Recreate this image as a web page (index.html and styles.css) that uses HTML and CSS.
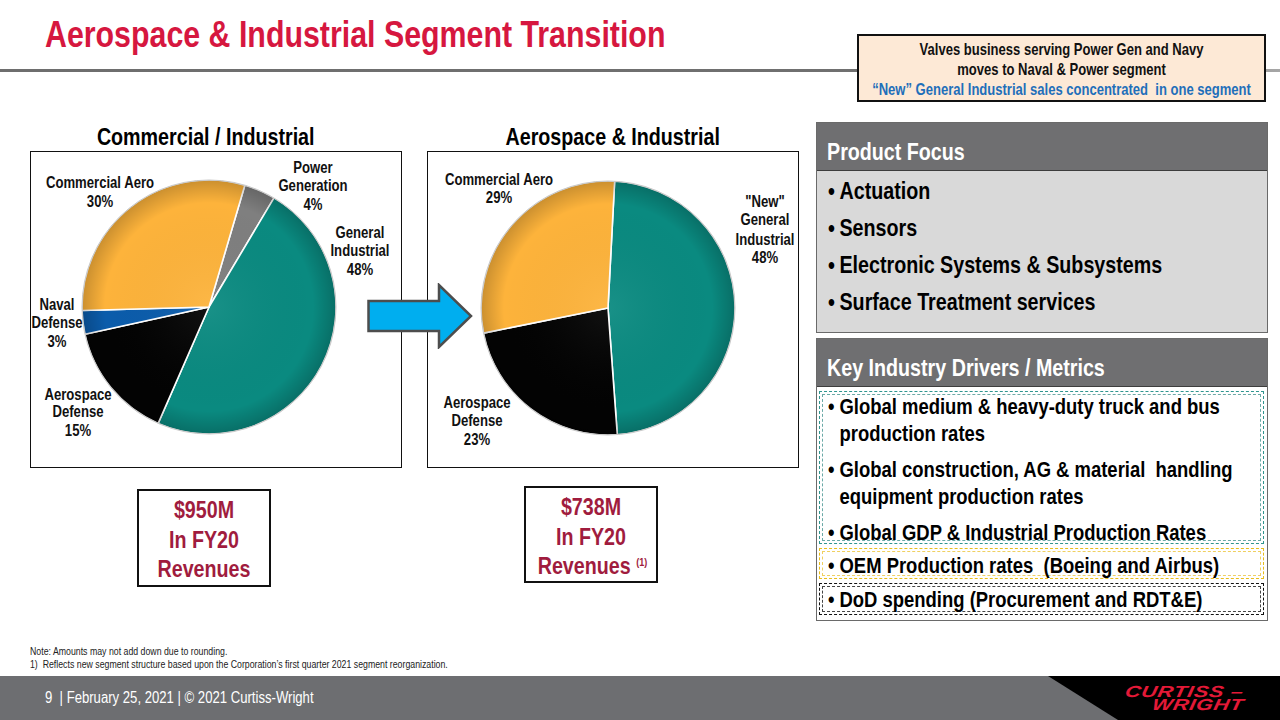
FILE: index.html
```html
<!DOCTYPE html>
<html lang="en">
<head>
<meta charset="utf-8">
<title>Aerospace &amp; Industrial Segment Transition</title>
<link rel="stylesheet" href="styles.css">
</head>
<body>
<div class="slide">
  <header class="header">
    <h1 class="title">Aerospace &amp; Industrial Segment Transition</h1>
    <div class="rule"></div>
    <div class="callout">
      <div class="callout-text">
        <div>Valves business serving Power Gen and Navy</div>
        <div>moves to Naval &amp; Power segment</div>
        <div class="callout-blue">“New” General Industrial sales concentrated&nbsp; in one segment</div>
      </div>
    </div>
  </header>

  <main class="main">
    <section class="left">
      <div class="charts">
        <div class="chart-col">
          <div class="chart-title chart-title-left"><span>Commercial / Industrial</span></div>
          <div class="chart-box">
            <svg class="pie" viewBox="0 0 370 315" width="370" height="315">
              <defs>
                <radialGradient id="shade1" cx="178" cy="155" r="127" gradientUnits="userSpaceOnUse">
                  <stop offset="0" stop-color="#fff" stop-opacity="0.06"/>
                  <stop offset="0.82" stop-color="#000" stop-opacity="0"/>
                  <stop offset="1" stop-color="#000" stop-opacity="0.2"/>
                </radialGradient>
              </defs>
              <g stroke="#fff" stroke-width="1.6" stroke-linejoin="round">
                <path fill="#7f7f7f" d="M178,155 L213.85,33.17 A127,127 0 0 1 243.03,45.91 Z"/>
                <path fill="#0a8a80" d="M178,155 L243.03,45.91 A127,127 0 0 1 127.16,271.38 Z"/>
                <path fill="#030303" d="M178,155 L127.16,271.38 A127,127 0 0 1 53.96,182.27 Z"/>
                <path fill="#0b5cab" d="M178,155 L53.96,182.27 A127,127 0 0 1 51.05,158.55 Z"/>
                <path fill="#fdb33b" d="M178,155 L51.05,158.55 A127,127 0 0 1 213.85,33.17 Z"/>
              </g>
              <circle cx="178" cy="155" r="127" fill="url(#shade1)" stroke="#c8c8c8" stroke-width="1"/>
              <g class="lbl">
                <text x="69" y="36">Commercial Aero</text>
                <text x="69" y="55">30%</text>
                <text x="282" y="21">Power</text>
                <text x="282" y="39">Generation</text>
                <text x="282" y="58">4%</text>
                <text x="329" y="86">General</text>
                <text x="329" y="104">Industrial</text>
                <text x="329" y="123">48%</text>
                <text x="26" y="158">Naval</text>
                <text x="26" y="176">Defense</text>
                <text x="26" y="195">3%</text>
                <text x="47" y="248">Aerospace</text>
                <text x="47" y="265">Defense</text>
                <text x="47" y="284">15%</text>
              </g>
            </svg>
          </div>
        </div>
        <div class="chart-col">
          <div class="chart-title"><span>Aerospace &amp; Industrial</span></div>
          <div class="chart-box">
            <svg class="pie" viewBox="0 0 370 315" width="370" height="315">
              <defs>
                <radialGradient id="shade2" cx="180" cy="156" r="127" gradientUnits="userSpaceOnUse">
                  <stop offset="0" stop-color="#fff" stop-opacity="0.06"/>
                  <stop offset="0.82" stop-color="#000" stop-opacity="0"/>
                  <stop offset="1" stop-color="#000" stop-opacity="0.2"/>
                </radialGradient>
              </defs>
              <g stroke="#fff" stroke-width="1.6" stroke-linejoin="round">
                <path fill="#0a8a80" d="M180,156 L186.65,29.17 A127,127 0 0 1 189.30,282.66 Z"/>
                <path fill="#030303" d="M180,156 L189.30,282.66 A127,127 0 0 1 55.50,181.11 Z"/>
                <path fill="#fdb33b" d="M180,156 L55.50,181.11 A127,127 0 0 1 186.65,29.17 Z"/>
              </g>
              <circle cx="180" cy="156" r="127" fill="url(#shade2)" stroke="#c8c8c8" stroke-width="1"/>
              <g class="lbl">
                <text x="71" y="33">Commercial Aero</text>
                <text x="71" y="51">29%</text>
                <text x="337" y="55">"New"</text>
                <text x="337" y="73">General</text>
                <text x="337" y="93">Industrial</text>
                <text x="337" y="111">48%</text>
                <text x="49" y="256">Aerospace</text>
                <text x="49" y="274">Defense</text>
                <text x="49" y="293">23%</text>
              </g>
            </svg>
          </div>
        </div>
        <svg class="arrow" viewBox="0 0 106 66" width="106" height="66">
          <polygon points="1.5,18 72,18 72,2 104,33 72,64 72,48 1.5,48" fill="#00aeef" stroke="#4d4d4d" stroke-width="2.5" stroke-linejoin="miter"/>
        </svg>
      </div>
      <div class="revenues">
        <div class="rev rev-left">
          <div>$950M</div>
          <div>In FY20</div>
          <div>Revenues</div>
        </div>
        <div class="rev rev-right">
          <div>$738M</div>
          <div>In FY20</div>
          <div>Revenues <sup class="fn">(1)</sup></div>
        </div>
      </div>
    </section>

    <aside class="panel">
      <div class="card card-focus">
        <div class="card-head"><span>Product Focus</span></div>
        <ul class="card-list focus-list">
          <li>Actuation</li>
          <li>Sensors</li>
          <li>Electronic Systems &amp; Subsystems</li>
          <li>Surface Treatment services</li>
        </ul>
      </div>
      <div class="card card-drivers">
        <div class="card-head"><span>Key Industry Drivers / Metrics</span></div>
        <div class="driver-body">
          <ul class="card-list group group-teal">
            <li>Global medium &amp; heavy-duty truck and bus production rates</li>
            <li>Global construction, AG &amp; material&nbsp; handling equipment production rates</li>
            <li>Global GDP &amp; Industrial Production Rates</li>
          </ul>
          <ul class="card-list group group-yellow">
            <li>OEM Production rates&nbsp; (Boeing and Airbus)</li>
          </ul>
          <ul class="card-list group group-black">
            <li>DoD spending (Procurement and RDT&amp;E)</li>
          </ul>
        </div>
      </div>
    </aside>
  </main>

  <div class="notes">
    <div>Note: Amounts may not add down due to rounding.</div>
    <div>1)&nbsp; Reflects new segment structure based upon the Corporation’s first quarter 2021 segment reorganization.</div>
  </div>

  <footer class="footer">
    <div class="footer-text">9&nbsp; | February 25, 2021 | © 2021 Curtiss-Wright</div>
    <div class="brand">
      <div class="brand-logo">
        <span class="brand-l1">CURTISS –</span>
        <span class="brand-l2">WRIGHT</span>
      </div>
    </div>
  </footer>
</div>
</body>
</html>
```

FILE: styles.css
```css
* { box-sizing: border-box; }

html, body {
  margin: 0;
  padding: 0;
  background: #fff;
}

body {
  font-family: "Liberation Sans", Arial, sans-serif;
  color: #000;
}

.slide {
  width: 1280px;
  height: 720px;
  overflow: hidden;
  display: flex;
  flex-direction: column;
  background: #fff;
}

/* narrow look: Arial Narrow ≈ Arial at 82% width */

/* ---------- header ---------- */
.header {
  position: relative;
  height: 72px;
  display: flex;
  flex-direction: column;
}

.title {
  margin: 0;
  padding: 15px 0 0 45px;
  font-size: 37px;
  line-height: 40px;
  font-weight: 700;
  color: #d6173f;
  white-space: nowrap;
  transform: scaleX(0.82);
  transform-origin: 45px 0;
}

.rule {
  margin-top: 14px;
  height: 3px;
  background: linear-gradient(to right, #6e6e6e 0%, #707070 80%, #a6a6a6 100%);
}

.callout {
  position: absolute;
  left: 857px;
  top: 34px;
  width: 409px;
  height: 68px;
  background: #fde9d6;
  border: 2px solid #111;
  overflow: hidden;
}

.callout-text {
  width: 494px;
  transform: scaleX(0.82);
  transform-origin: 0 0;
  text-align: center;
  font-size: 15.9px;
  font-weight: 700;
  line-height: 20px;
  padding-top: 4px;
  color: #111;
  white-space: nowrap;
}

.callout-blue { color: #1f6fba; }

/* ---------- main ---------- */
.main {
  height: 573px;
  display: flex;
}

.left {
  width: 816px;
  display: flex;
  flex-direction: column;
}

.charts {
  position: relative;
  display: flex;
  gap: 25px;
  padding: 50px 0 0 30px;
}

.chart-col {
  width: 372px;
  display: flex;
  flex-direction: column;
}

.chart-title {
  height: 29px;
  line-height: 29px;
  text-align: center;
  font-size: 24px;
  font-weight: 700;
  white-space: nowrap;
}

.chart-title span {
  display: inline-block;
  transform: scaleX(0.82);
}

.chart-title-left { padding-right: 20px; }

.chart-box {
  height: 317px;
  border: 1px solid #111;
}

.pie { display: block; }

.lbl text {
  font-family: "Liberation Sans", Arial, sans-serif;
  font-size: 16px;
  font-weight: 700;
  text-anchor: middle;
  fill: #111;
  transform-box: fill-box;
  transform-origin: center;
  transform: scaleX(0.82);
}

.arrow {
  position: absolute;
  left: 367px;
  top: 211px;
}

.revenues {
  display: flex;
  align-items: flex-start;
  margin-top: 18px;
}

.rev {
  width: 134px;
  border: 2px solid #111;
  text-align: center;
  color: #a01c3e;
  font-size: 24px;
  font-weight: 700;
  line-height: 29.5px;
  padding-top: 4px;
  white-space: nowrap;
}

.rev div {
  transform: scaleX(0.82);
}

.rev-left {
  margin-left: 137px;
  margin-top: 3px;
  height: 98px;
}

.rev-right {
  margin-left: 253px;
  height: 97px;
}

.fn {
  font-size: 11px;
  vertical-align: 8px;
  line-height: 0;
}

/* ---------- right panel ---------- */
.panel {
  width: 452px;
  margin-top: 50px;
  display: flex;
  flex-direction: column;
  gap: 5px;
}

.card {
  border: 1px solid #6a6a6a;
  display: flex;
  flex-direction: column;
}

.card-head {
  height: 48px;
  padding: 10px 0 0 10px;
  line-height: 38px;
  background: #6f6f71;
  color: #fff;
  font-size: 24px;
  font-weight: 700;
  border-bottom: 1px solid #3d3d3d;
  white-space: nowrap;
}

.card-head span {
  display: inline-block;
  transform: scaleX(0.82);
  transform-origin: 0 50%;
}

.card-list {
  list-style: none;
  margin: 0;
  padding: 0;
}

.card-list li {
  display: flex;
  font-weight: 700;
  width: 122%;
  transform: scaleX(0.82);
  transform-origin: 0 0;
}

.card-list li::before {
  content: "•";
  flex: 0 0 14px;
}

.focus-list {
  height: 161px;
  background: #d9d9d9;
  padding: 1px 0 0 11px;
}

.focus-list li {
  font-size: 24px;
  line-height: 37px;
  white-space: nowrap;
}

.driver-body {
  height: 233px;
  background: #fff;
  padding: 4px 3px 0 2px;
  display: flex;
  flex-direction: column;
  gap: 4px;
}

.group {
  padding: 0 4px 0 8px;
  outline-offset: -4px;
}

.group li {
  font-size: 22.5px;
  line-height: 27px;
}

.group-teal {
  height: 153px;
  border: 1px dashed #2f958f;
  outline: 1px dashed #6aa9a6;
  display: flex;
  flex-direction: column;
  gap: 9px;
  padding-top: 1px;
}

.group-yellow {
  height: 31px;
  border: 1px dashed #e8bd1c;
  outline: 1px dashed #f0d060;
  padding-top: 3px;
}

.group-black {
  height: 32px;
  border: 1px dashed #111;
  outline: 1px dashed #444;
  padding-top: 2px;
}

.group-yellow li, .group-black li { white-space: nowrap; }

/* ---------- notes & footer ---------- */
.notes {
  padding-left: 30px;
  font-size: 10.7px;
  line-height: 13px;
  color: #222;
  white-space: nowrap;
  transform: scaleX(0.82);
  transform-origin: 30px 0;
}

.footer {
  position: relative;
  margin-top: auto;
  height: 44px;
  background: #6d6e71;
  display: flex;
  align-items: center;
  padding-left: 45px;
}

.footer-text {
  color: #fff;
  font-size: 16px;
  white-space: nowrap;
  transform: scaleX(0.82);
  transform-origin: 0 50%;
}

.brand {
  position: absolute;
  right: 0;
  top: 0;
  bottom: 0;
  width: 232px;
  background: #000;
  clip-path: polygon(0 0, 100% 0, 100% 100%, 70px 100%);
}

.brand-logo {
  position: absolute;
  left: 76px;
  top: 9px;
  width: 120px;
  display: flex;
  flex-direction: column;
  align-items: flex-end;
  font-family: "Liberation Sans", Arial, sans-serif;
  font-style: italic;
  font-weight: 900;
  color: #e31937;
  font-size: 16px;
  line-height: 13px;
  letter-spacing: 0.5px;
}

.brand-l1, .brand-l2 {
  display: block;
  transform: scaleX(1.35) skewX(-8deg);
  transform-origin: right center;
}
```
